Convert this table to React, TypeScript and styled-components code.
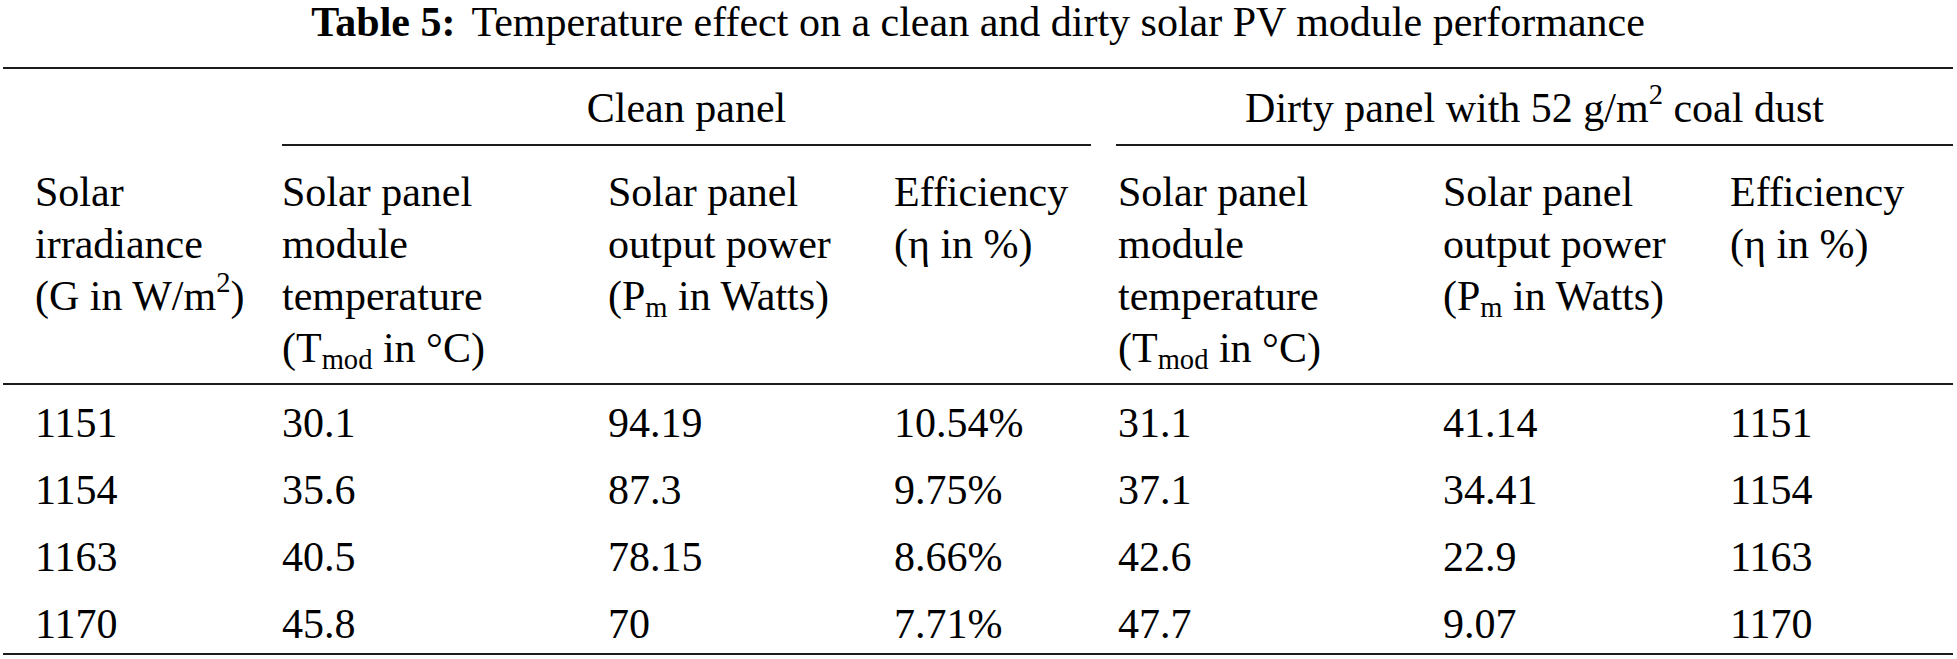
import React from 'react';
import styled, { createGlobalStyle } from 'styled-components';

const GlobalStyle = createGlobalStyle`
  html, body {
    margin: 0;
    padding: 0;
    background: #ffffff;
  }
  body {
    font-family: "Liberation Serif", "Times New Roman", serif;
    color: #000000;
  }
`;

const COLS = '279px 326px 286px 224px 325px 287px 223px';
const RULE = '#1c1c1c';

const Page = styled.div`
  width: 1957px;
  box-sizing: border-box;
  padding: 0 4px 0 3px;
`;

const Caption = styled.div`
  height: 67px;
  text-align: center;
  font-size: 42px;
  line-height: 44px;
  white-space: nowrap;
`;

const CaptionLabel = styled.b`
  font-weight: 700;
  margin-right: 16px;
`;

const Table = styled.div`
  border-top: 2px solid ${RULE};
  border-bottom: 2px solid ${RULE};
  font-size: 42px;
`;

const Row = styled.div<{ $ruled?: boolean }>`
  display: grid;
  grid-template-columns: ${COLS};
  border-bottom: ${p => (p.$ruled ? `2px solid ${RULE}` : 'none')};
`;

const GroupCell = styled.div<{ $start: number; $trimRight?: number; $trimLeft?: number }>`
  grid-column: ${p => p.$start} / span 3;
  margin-right: ${p => p.$trimRight ?? 0}px;
  margin-left: ${p => p.$trimLeft ?? 0}px;
  padding: 17px 0 13px;
  line-height: 45px;
  text-align: center;
  border-bottom: 2px solid ${RULE};
  white-space: nowrap;
`;

const HeadCell = styled.div<{ $first?: boolean }>`
  padding: 20px 0 9px ${p => (p.$first ? '32px' : '0')};
  line-height: 52px;
  white-space: nowrap;
`;

const Line = styled.div``;

const BodyCell = styled.div<{ $first?: boolean }>`
  padding: 16px 0 6px ${p => (p.$first ? '32px' : '0')};
  line-height: 45px;
  white-space: nowrap;
`;

const Sup = styled.sup`
  font-size: 0.68em;
  line-height: 0;
  vertical-align: 0.62em;
`;

const Sub = styled.sub`
  font-size: 0.68em;
  line-height: 0;
  vertical-align: -0.25em;
`;

const tempHead = [
  'Solar panel',
  'module',
  'temperature',
  <>
    (T<Sub>mod</Sub> in °C)
  </>,
];
const powerHead = [
  'Solar panel',
  'output power',
  <>
    (P<Sub>m</Sub> in Watts)
  </>,
];
const effHead = ['Efficiency', '(η in %)'];

const headers: React.ReactNode[][] = [
  [
    'Solar',
    'irradiance',
    <>
      (G in W/m<Sup>2</Sup>)
    </>,
  ],
  tempHead,
  powerHead,
  effHead,
  tempHead,
  powerHead,
  effHead,
];

const rows = [
  ['1151', '30.1', '94.19', '10.54%', '31.1', '41.14', '1151'],
  ['1154', '35.6', '87.3', '9.75%', '37.1', '34.41', '1154'],
  ['1163', '40.5', '78.15', '8.66%', '42.6', '22.9', '1163'],
  ['1170', '45.8', '70', '7.71%', '47.7', '9.07', '1170'],
];

export default function App() {
  return (
    <Page>
      <GlobalStyle />
      <Caption>
        <CaptionLabel>Table 5:</CaptionLabel>
        Temperature effect on a clean and dirty solar PV module performance
      </Caption>
      <Table>
        <Row>
          <GroupCell $start={2} $trimRight={27}>
            Clean panel
          </GroupCell>
          <GroupCell $start={5} $trimLeft={-2}>
            Dirty panel with 52 g/m<Sup>2</Sup> coal dust
          </GroupCell>
        </Row>
        <Row $ruled>
          {headers.map((lines, i) => (
            <HeadCell key={i} $first={i === 0}>
              {lines.map((l, j) => (
                <Line key={j}>{l}</Line>
              ))}
            </HeadCell>
          ))}
        </Row>
        {rows.map((r, i) => (
          <Row key={i}>
            {r.map((v, j) => (
              <BodyCell key={j} $first={j === 0}>
                {v}
              </BodyCell>
            ))}
          </Row>
        ))}
      </Table>
    </Page>
  );
}
